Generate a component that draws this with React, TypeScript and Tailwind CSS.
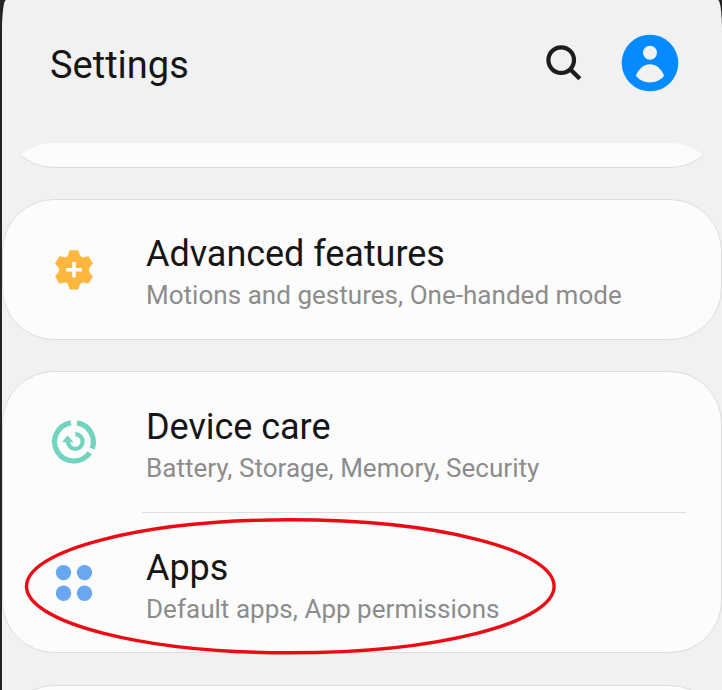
import type { ReactNode } from "react";

type RowProps = {
  icon: ReactNode;
  title: string;
  subtitle: string;
};

function SearchIcon() {
  return (
    <svg width="40" height="40" viewBox="0 0 40 40" fill="none" stroke="#1c1c1c">
      <circle cx="17.2" cy="17.1" r="12.8" strokeWidth="4.2" />
      <path d="M26 26 35.8 35.8" strokeWidth="4.4" />
    </svg>
  );
}

function ProfileIcon() {
  return (
    <svg width="58" height="58" viewBox="0 0 58 58">
      <circle cx="29" cy="29" r="28.3" fill="#048bff" />
      <circle cx="29" cy="18.7" r="7" fill="#f2f2f2" />
      <path d="M14.8 41.8C18 34.5 22.8 30.3 29 30.3S40 34.5 43.2 41.8C39.5 46.2 34.8 48.5 29 48.5S18.5 46.2 14.8 41.8Z" fill="#f2f2f2" />
    </svg>
  );
}

function AdvancedIcon() {
  return (
    <svg width="48" height="48" viewBox="0 0 48 48">
      <path
        d="M20 4.800h8l1.700 5.400 3 1.700 5.700-1.200 4 6.700-3.700 4.500v4l3.700 4.500-4 6.700-5.700-1.200-3 1.700-1.700 5.400h-8l-1.700-5.400-3-1.700-5.700 1.200-4-6.700 3.700-4.500v-4l-3.700-4.500 4-6.700 5.700 1.200 3-1.700Z"
        fill="#fdb73e"
        stroke="#fdb73e"
        strokeWidth="1"
        strokeLinejoin="round"
      />
      <path d="M24 16v15.600M16.200 23.800h15.600" stroke="#fff" strokeWidth="3.500" />
    </svg>
  );
}

function CareIcon() {
  return (
    <svg width="48" height="48" viewBox="0 0 48 48" fill="none" stroke="#71d4be">
      <path d="M21 4.830A19.200 19.200 0 1 0 39.600 34.700" strokeWidth="5.200" />
      <path d="M27 4.830A19.200 19.200 0 0 1 42.100 30.600" strokeWidth="5.200" />
      <path d="M25.300 16.200A7.300 7.300 0 1 1 18 23.500" strokeWidth="4.200" />
      <path d="M12 24.200 17.700 17.600 23.600 24.200Z" fill="#71d4be" stroke="none" />
    </svg>
  );
}

function AppsIcon() {
  return (
    <svg width="48" height="48" viewBox="0 0 48 48" fill="#69a7f0">
      <circle cx="13.500" cy="13.600" r="7.700" />
      <circle cx="34.500" cy="13.600" r="7.700" />
      <circle cx="13.500" cy="34.300" r="7.700" />
      <circle cx="34.500" cy="34.300" r="7.700" />
    </svg>
  );
}

function Row({ icon, title, subtitle }: RowProps) {
  return (
    <div className="flex h-[140px] items-center">
      <div className="flex w-[142px] shrink-0 justify-center">{icon}</div>
      <div className="pt-[7px] pl-px whitespace-nowrap">
        <h2 className="text-[36px] leading-[44px] tracking-[-0.040px] text-[#161616]">{title}</h2>
        <p className="text-[26px] leading-[38px] tracking-[0.030px] text-[#8c8c8c]">{subtitle}</p>
      </div>
    </div>
  );
}

function HighlightEllipse() {
  return (
    <svg className="absolute top-[144px] left-[20px]" width="535" height="141" viewBox="0 0 535 141" fill="none">
      <ellipse cx="267.300" cy="70.300" rx="263.800" ry="66.500" stroke="#ec0b14" strokeWidth="3.400" />
    </svg>
  );
}

export default function App() {
  return (
    <main className="h-[690px] w-[722px] overflow-hidden bg-[#242424] pl-[2px] font-['Roboto',sans-serif]">
      <div className="flex h-full w-[720px] flex-col overflow-hidden rounded-t-[4px_30px] bg-[#f1f1f1]">
        <header className="flex h-[143px] shrink-0 items-start pl-[48px]">
          <h1 className="pt-[42px] text-[38px] leading-[46px] text-[#161616]">Settings</h1>
          <div className="mr-[43px] ml-auto flex pt-[34px]">
            <div className="mr-[37px] pt-[9px]">
              <SearchIcon />
            </div>
            <ProfileIcon />
          </div>
        </header>
        <div className="flex min-h-0 flex-1 flex-col overflow-hidden rounded-t-[52px]">
          <section className="mb-8 flex h-[25px] shrink-0 flex-col justify-end overflow-hidden">
            <div className="h-[140px] shrink-0 rounded-[52px] border border-[#dcdcdc] bg-[#fcfcfc]" />
          </section>
          <section className="-mt-px mb-8 flex h-[141px] shrink-0 flex-col rounded-[52px] border border-[#dcdcdc] bg-[#fcfcfc]">
            <Row icon={<AdvancedIcon />} title="Advanced features" subtitle="Motions and gestures, One-handed mode" />
          </section>
          <section className="relative -mt-px mb-8 h-[282px] shrink-0 rounded-[52px] border border-[#dcdcdc] bg-[#fcfcfc]">
            <Row icon={<CareIcon />} title="Device care" subtitle="Battery, Storage, Memory, Security" />
            <div className="mr-[35px] ml-[139px] h-px bg-[#dedede]" />
            <Row icon={<AppsIcon />} title="Apps" subtitle="Default apps, App permissions" />
            <HighlightEllipse />
          </section>
          <section className="h-[140px] shrink-0 rounded-[52px] border border-[#dcdcdc] bg-[#fcfcfc]" />
        </div>
      </div>
    </main>
  );
}
